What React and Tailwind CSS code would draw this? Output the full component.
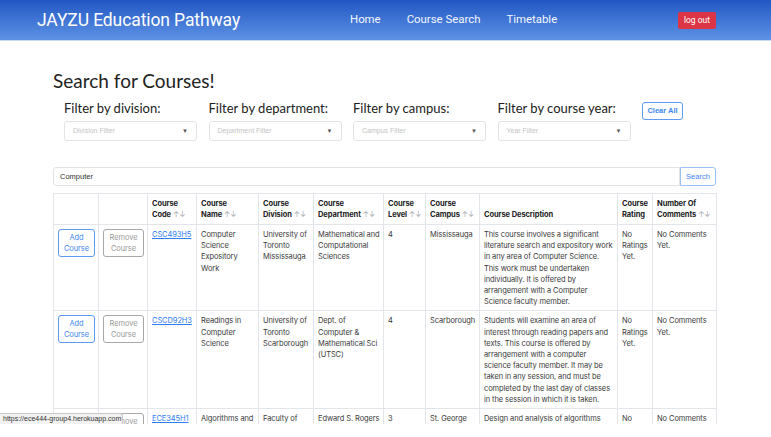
import React from "react";

const courses = [
  {
    code: "CSC493H5",
    name: "Computer Science Expository Work",
    division: "University of Toronto Mississauga",
    department: "Mathematical and Computational Sciences",
    level: "4",
    campus: "Mississauga",
    description:
      "This course involves a significant literature search and expository work in any area of Computer Science. This work must be undertaken individually. It is offered by arrangement with a Computer Science faculty member.",
    rating: "No Ratings Yet.",
    comments: "No Comments Yet.",
  },
  {
    code: "CSCD92H3",
    name: "Readings in Computer Science",
    division: "University of Toronto Scarborough",
    department: "Dept. of Computer & Mathematical Sci (UTSC)",
    level: "4",
    campus: "Scarborough",
    description:
      "Students will examine an area of interest through reading papers and texts. This course is offered by arrangement with a computer science faculty member. It may be taken in any session, and must be completed by the last day of classes in the session in which it is taken.",
    rating: "No Ratings Yet.",
    comments: "No Comments Yet.",
  },
  {
    code: "ECE345H1",
    name: "Algorithms and Data Structures",
    division: "Faculty of Applied Science & Engineering",
    department: "Edward S. Rogers Sr. Dept. of Electrical & Computer Engin.",
    level: "3",
    campus: "St. George",
    description:
      "Design and analysis of algorithms and data structures that are essential to engineers in every aspect of the computer hardware and software industry.",
    rating: "No Ratings Yet.",
    comments: "No Comments Yet.",
  },
];

const filters = [
  { label: "Filter by division:", placeholder: "Division Filter" },
  { label: "Filter by department:", placeholder: "Department Filter" },
  { label: "Filter by campus:", placeholder: "Campus Filter" },
  { label: "Filter by course year:", placeholder: "Year Filter" },
];

// header label: keep the last word glued to the sort arrows
function SortLabel({ first, last }) {
  return (
    <>
      {first}{" "}
      <span className="whitespace-nowrap">
        {last}
        <span className="font-normal text-[#a5a9ae]">{"\u00a0"}↑↓</span>
      </span>
    </>
  );
}

export default function App() {
  return (
    <div className="h-[437px] overflow-hidden bg-white">
      <div className="relative h-[424px] overflow-hidden">
        {/* Navbar */}
        <nav className="h-[41px] flex items-center bg-gradient-to-b from-[#2257c4] to-[#5e92e5] border-b border-[#c9d9f3] font-['Roboto',sans-serif] text-white">
          <div className="w-[350px] pl-[37px] text-[17.5px] tracking-[-0.1px]">JAYZU Education Pathway</div>
          <div className="flex gap-[26px] text-[11.4px] text-[#f4f7fd]">
            <span>Home</span>
            <span>Course Search</span>
            <span>Timetable</span>
          </div>
          <button className="ml-auto mr-[55px] h-[17px] w-[38px] rounded-[2px] bg-[#dc3545] text-[8.5px] text-white">
            log out
          </button>
        </nav>

        <div className="w-[663px] ml-[53px]">
          <h1 className="mt-[28px] font-['Lato',sans-serif] text-[19px] leading-[24px] text-[#222]">
            Search for Courses!
          </h1>

          {/* Filters */}
          <div className="flex items-start pl-[11px] mt-[7px]">
            {filters.map((f, i) => (
              <div key={i} className="w-[133px] mr-[11.5px]">
                <div className="font-['Lato',sans-serif] text-[13px] leading-[17px] text-[#222] whitespace-nowrap">
                  {f.label}
                </div>
                <div className="mt-[4px] h-[20px] flex items-center justify-between rounded-[3px] border border-[#e3e3e3] px-[8px] font-['Liberation_Sans',sans-serif] text-[7px] text-[#c4c4c4]">
                  <span>{f.placeholder}</span>
                  <span className="text-[6px] text-[#555]">▼</span>
                </div>
              </div>
            ))}
            <button className="mt-[2px] h-[18px] w-[41px] rounded-[3px] border border-[#5b9bf0] font-['Liberation_Sans',sans-serif] text-[7.5px] font-bold text-[#3f87f0]">
              Clear All
            </button>
          </div>

          {/* Search bar */}
          <div className="flex mt-[26px] h-[19px] font-['Liberation_Sans',sans-serif]">
            <div className="flex-1 flex items-center rounded-l-[3px] border border-[#dfe3e8] px-[6px] text-[7.5px] text-[#333]">
              Computer
            </div>
            <button className="w-[36px] rounded-r-[3px] border border-[#9cc2f5] text-[7.5px] text-[#3f87f0]">
              Search
            </button>
          </div>

          {/* Results table */}
          <table className="mt-[7px] w-[663px] table-fixed border-collapse font-['Inter',sans-serif] text-[7.5px] leading-[11.2px] tracking-[-0.09px] text-[#3a3a3a]">
            <colgroup>
              <col className="w-[45px]" />
              <col className="w-[49px]" />
              <col className="w-[49px]" />
              <col className="w-[62px]" />
              <col className="w-[55px]" />
              <col className="w-[70px]" />
              <col className="w-[42px]" />
              <col className="w-[54px]" />
              <col className="w-[138px]" />
              <col className="w-[35px]" />
              <col className="w-[64px]" />
            </colgroup>
            <thead>
              <tr className="h-[31px] text-left align-bottom font-semibold text-[#222]">
                <th className="border border-[#e2e5e9]"></th>
                <th className="border border-[#e2e5e9]"></th>
                <th className="border border-[#e2e5e9] px-[4px] pb-[4px]"><SortLabel first="Course" last="Code" /></th>
                <th className="border border-[#e2e5e9] px-[4px] pb-[4px]"><SortLabel first="Course" last="Name" /></th>
                <th className="border border-[#e2e5e9] px-[4px] pb-[4px]"><SortLabel first="Course" last="Division" /></th>
                <th className="border border-[#e2e5e9] px-[4px] pb-[4px]"><SortLabel first="Course" last="Department" /></th>
                <th className="border border-[#e2e5e9] px-[4px] pb-[4px]"><SortLabel first="Course" last="Level" /></th>
                <th className="border border-[#e2e5e9] px-[4px] pb-[4px]"><SortLabel first="Course" last="Campus" /></th>
                <th className="border border-[#e2e5e9] px-[4px] pb-[4px]">Course Description</th>
                <th className="border border-[#e2e5e9] px-[4px] pb-[4px]">Course Rating</th>
                <th className="border border-[#e2e5e9] px-[4px] pb-[4px]"><SortLabel first="Number Of" last="Comments" /></th>
              </tr>
            </thead>
            <tbody>
              {courses.map((c) => (
                <tr key={c.code} className="align-top">
                  <td className="border border-[#e2e5e9] px-[4px] pt-[4px] pb-[3px]">
                    <button className="w-[37px] h-[28px] rounded-[3px] border border-[#5b9bf0] text-[7.5px] leading-[11px] text-[#3f87f0]">
                      Add Course
                    </button>
                  </td>
                  <td className="border border-[#e2e5e9] px-[4px] pt-[4px]">
                    <button className="w-[41px] h-[28px] rounded-[3px] border border-[#a8a8a8] text-[7.5px] leading-[11px] text-[#9a9a9a]">
                      Remove Course
                    </button>
                  </td>
                  <td className="border border-[#e2e5e9] px-[4px] pt-[4px]">
                    <a href="#" className="text-[#2f7cf6] underline">{c.code}</a>
                  </td>
                  <td className="border border-[#e2e5e9] px-[4px] pt-[4px]">{c.name}</td>
                  <td className="border border-[#e2e5e9] px-[4px] pt-[4px]">{c.division}</td>
                  <td className="border border-[#e2e5e9] pl-[4px] pr-[1px] pt-[4px]">{c.department}</td>
                  <td className="border border-[#e2e5e9] px-[4px] pt-[4px]">{c.level}</td>
                  <td className="border border-[#e2e5e9] px-[4px] pt-[4px]">{c.campus}</td>
                  <td className="border border-[#e2e5e9] px-[4px] pt-[4px] pb-[3px]">{c.description}</td>
                  <td className="border border-[#e2e5e9] px-[4px] pt-[4px]">{c.rating}</td>
                  <td className="border border-[#e2e5e9] px-[4px] pt-[4px]">{c.comments}</td>
                </tr>
              ))}
            </tbody>
          </table>
        </div>

        {/* Link status bubble */}
        <div className="absolute left-0 bottom-0 h-[11px] w-[123px] flex items-center rounded-tr-[3px] border border-l-0 border-b-0 border-[#c8c8c8] bg-[#f2f2f2] pl-[3px] font-['Liberation_Sans',sans-serif] text-[7px] text-[#333]">
          https://ece444-group4.herokuapp.com
        </div>
      </div>
    </div>
  );
}
